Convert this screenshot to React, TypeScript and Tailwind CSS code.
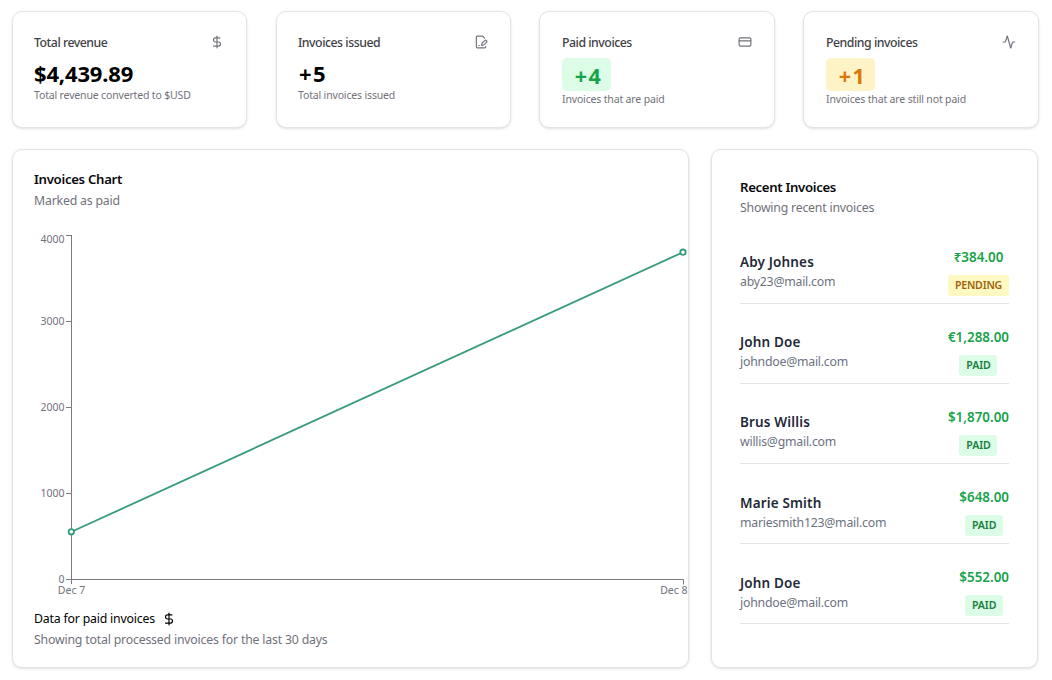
import React from "react";
import { DollarSign, CreditCard, Activity, FilePenLine } from "lucide-react";

const card = "rounded-[10px] border border-[#e4e4e7] bg-white shadow-[0_1px_3px_0_rgba(0,0,0,0.1),0_1px_2px_-1px_rgba(0,0,0,0.1)]";

type StatProps = {
  title: string;
  value: string;
  note: string;
  icon: React.ReactNode;
  tone?: string;
  valueStyle?: string;
};

function Stat({ title, value, note, icon, tone, valueStyle = "" }: StatProps) {
  return (
    <section className={`${card} h-[117px] pr-[21px] pt-[21px] ${tone ? "pl-[22px]" : "pl-[21px]"}`}>
      <div className="flex h-[18px] items-center justify-between">
        <h2 className="pt-[2px] text-[12.3px] font-medium leading-[18px] tracking-[-0.48px] text-[#3f3f46]">{title}</h2>
        <span className="mr-px text-[#71717a]">{icon}</span>
      </div>
      {tone ? (
        <div className={`mt-[7px] flex h-[33px] w-[49px] items-center justify-center rounded-[5px] pl-[4px] pt-[4px] text-[21.5px] font-bold tracking-[1.4px] ${tone}`}>
          {value}
        </div>
      ) : (
        <div className={`mt-[8px] flex h-[28px] items-center whitespace-nowrap pt-px text-[22px] font-bold text-black ${valueStyle}`}>{value}</div>
      )}
      <p className="text-[10.5px] leading-[16px] tracking-[-0.16px] text-[#71717a]">{note}</p>
    </section>
  );
}

const ticks = [
  { label: "4000", y: 8.5, ty: 15.5 },
  { label: "3000", y: 94.5, ty: 98 },
  { label: "2000", y: 180.5, ty: 184 },
  { label: "1000", y: 266.5, ty: 270 },
  { label: "0", y: 352.5, ty: 356 },
];

function Chart() {
  return (
    <svg width="675" height="376" viewBox="0 0 675 376" fill="none" className="block">
      <g stroke="#7c7c80" strokeWidth="1">
        <path d="M58.5 8v349M53 352.5h617.500v5" />
        {ticks.map((t) => (
          <path key={t.label} d={`M53 ${t.y}h6`} />
        ))}
      </g>
      <g fill="#71717a" fontSize="10.5">
        {ticks.map((t) => (
          <text key={t.label} x="51.500" y={t.ty} textAnchor="end">{t.label}</text>
        ))}
        <text x="58.500" y="367" textAnchor="middle">Dec 7</text>
        <text x="674.500" y="367" textAnchor="end">Dec 8</text>
      </g>
      <path d="M58.500 304.800L670 25.200" stroke="#369c77" strokeWidth="1.800" />
      <circle cx="58.300" cy="304.800" r="2.700" fill="white" stroke="#369c77" strokeWidth="1.800" />
      <circle cx="670" cy="25.200" r="2.700" fill="white" stroke="#369c77" strokeWidth="1.800" />
    </svg>
  );
}

const invoices = [
  { name: "Aby Johnes", mail: "aby23@mail.com", amount: "₹384.00", status: "PENDING", lift: "mb-[12px]" },
  { name: "John Doe", mail: "johndoe@mail.com", amount: "€1,288.00", status: "PAID", lift: "mb-[12px]" },
  { name: "Brus Willis", mail: "willis@gmail.com", amount: "$1,870.00", status: "PAID", lift: "mb-[12px]" },
  { name: "Marie Smith", mail: "mariesmith123@mail.com", amount: "$648.00", status: "PAID", lift: "mb-[11px]" },
  { name: "John Doe", mail: "johndoe@mail.com", amount: "$552.00", status: "PAID", lift: "mb-[11px]" },
];

export default function App() {
  return (
    <main className="h-[680px] w-[1052px] overflow-hidden bg-white pl-[12px] pr-[13px] pt-[11px] font-['Noto_Sans','Open_Sans',sans-serif]">
      <div className="grid grid-cols-[264px_263px_264px_236px]">
        <div className="pr-[29px]">
          <Stat title="Total revenue" value="$4,439.89" note="Total revenue converted to $USD" icon={<DollarSign size={14} />} valueStyle="tracking-[-0.15px]" />
        </div>
        <div className="pr-[28px]">
          <Stat title="Invoices issued" value="+5" note="Total invoices issued" icon={<FilePenLine size={14} />} valueStyle="pl-px tracking-[1.4px]" />
        </div>
        <div className="pr-[28px]">
          <Stat title="Paid invoices" value="+4" note="Invoices that are paid" icon={<CreditCard size={14} />} tone="bg-[#dcfce7] text-[#16a34a]" />
        </div>
        <Stat title="Pending invoices" value="+1" note="Invoices that are still not paid" icon={<Activity size={14} />} tone="bg-[#fef3c7] text-[#d97706]" />
      </div>
      <div className="mt-[21px] flex gap-[22px]">
        <section className={`${card} h-[519px] w-[677px] shrink-0`}>
          <div className="px-[21px] pt-[19px]">
            <h2 className="text-[13.2px] font-semibold leading-[20px] tracking-[-0.3px] text-[#09090b]">Invoices Chart</h2>
            <p className="mt-[2px] text-[12.3px] leading-[20px] tracking-[-0.2px] text-[#71717a]">Marked as paid</p>
          </div>
          <div className="mt-[16px]">
            <Chart />
          </div>
          <div className="px-[21px] pt-[6px]">
            <div className="flex items-center gap-[7px] text-[12.3px] leading-[20px] tracking-[-0.19px] text-black">
              <span>Data for paid invoices</span>
              <DollarSign size={14} />
            </div>
            <p className="mt-px text-[12.3px] leading-[20px] tracking-[-0.19px] text-[#71717a]">Showing total processed invoices for the last 30 days</p>
          </div>
        </section>
        <section className={`${card} h-[519px] w-[327px] shrink-0 px-[28px] pt-[27px]`}>
          <h2 className="text-[13.2px] font-semibold leading-[20px] tracking-[-0.33px] text-[#09090b]">Recent Invoices</h2>
          <p className="mt-px text-[12.3px] leading-[20px] tracking-[-0.21px] text-[#71717a]">Showing recent invoices</p>
          <ul className="mt-[6px]">
            {invoices.map((v, i) => (
              <li key={i} className="flex h-[80px] items-end justify-between border-b border-[#e4e4e7]">
                <div className={v.lift}>
                  <div className="text-[13.5px] font-semibold leading-[20px] tracking-[0.15px] text-[#1f2937]">{v.name}</div>
                  <div className="text-[12.3px] leading-[19px] tracking-[-0.23px] text-[#6b7280]">{v.mail}</div>
                </div>
                <div className="mb-[7px] flex flex-col items-center">
                  <div className="text-[13.4px] font-semibold leading-[20px] text-[#16a34a]">{v.amount}</div>
                  {v.status === "PAID" ? (
                    <span className="mt-[8px] flex h-[21px] w-[38px] items-center justify-center rounded-[3px] bg-[#dcfce7] pt-px text-[10.6px] font-semibold tracking-[-0.1px] text-[#15803d]">PAID</span>
                  ) : (
                    <span className="mt-[8px] flex h-[21px] w-[61px] items-center justify-center rounded-[3px] bg-[#fef9c3] pt-px text-[10.6px] font-semibold tracking-[-0.2px] text-[#a16207]">PENDING</span>
                  )}
                </div>
              </li>
            ))}
          </ul>
        </section>
      </div>
    </main>
  );
}
